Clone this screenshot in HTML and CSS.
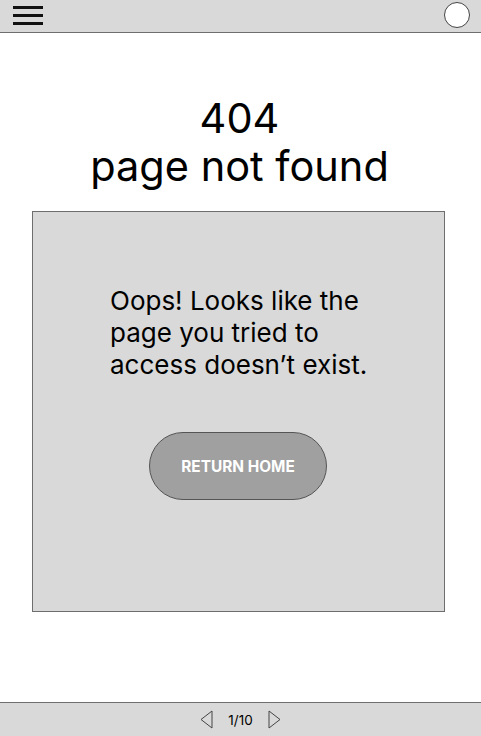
FILE: index.html
```html
<!DOCTYPE html>
<html>
<head>
<meta charset="utf-8">
<link rel="stylesheet" href="styles.css">
</head>
<body>
<div class="page">
  <header class="topbar">
    <div class="burger"><span></span><span></span><span></span></div>
    <div class="avatar"></div>
  </header>
  <main class="content">
    <h1 class="title">404<br>page not found</h1>
    <section class="card">
      <p class="message">Oops! Looks like the page you tried to access doesn’t exist.</p>
      <button class="home-btn">RETURN HOME</button>
    </section>
  </main>
  <footer class="pager">
    <svg class="arrow" width="13" height="19" viewBox="0 0 13 19"><path d="M12 1 L1 9.5 L12 18 Z" fill="none" stroke="#444" stroke-width="1"/></svg>
    <span class="count">1/10</span>
    <svg class="arrow" width="13" height="19" viewBox="0 0 13 19"><path d="M1 1 L12 9.5 L1 18 Z" fill="none" stroke="#444" stroke-width="1"/></svg>
  </footer>
</div>
</body>
</html>
```
FILE: styles.css
```css
* { box-sizing: border-box; }
html, body { margin: 0; padding: 0; background: #fff; }
body { font-family: Inter, "Noto Sans", sans-serif; color: #000; }
.page { width: 481px; height: 736px; display: flex; flex-direction: column; }
.topbar {
  height: 33px; background: #d9d9d9; border-bottom: 1px solid #6e6e6e;
  display: flex; align-items: center; justify-content: space-between;
  padding: 0 11px 0 13px;
}
.burger { width: 30px; display: flex; flex-direction: column; gap: 5px; margin-top: -2px; }
.burger span { display: block; height: 3px; background: #111; }
.avatar { width: 26px; height: 26px; border-radius: 50%; background: #fff; border: 1px solid #444; margin-top: -2px; }
.content { flex: 1; display: flex; flex-direction: column; align-items: center; }
.title {
  margin: 61px 0 0; font-weight: 400; font-size: 41.5px; line-height: 48px; text-align: center;
  transform: translateX(-1px);
}
.card {
  margin: 21px 0 0 32px; align-self: flex-start; width: 413px; height: 401px;
  background: #d9d9d9; border: 1px solid #6e6e6e;
  display: flex; flex-direction: column; align-items: center;
}
.message {
  margin: 73px 0 0 77px; align-self: flex-start; width: 264px;
  font-size: 26px; line-height: 32px;
}
.home-btn {
  margin: 51px 1px 0 0; width: 178px; height: 68px; border-radius: 34px;
  background: #a0a0a0; border: 1px solid #555; color: #fff;
  font-family: Inter, sans-serif; font-weight: 700; font-size: 15.4px; padding: 0;
}
.pager {
  height: 34px; background: #d9d9d9; border-top: 1px solid #6e6e6e;
  display: flex; align-items: center; justify-content: center; gap: 15px;
}
.count { font-size: 13.5px; }
```
